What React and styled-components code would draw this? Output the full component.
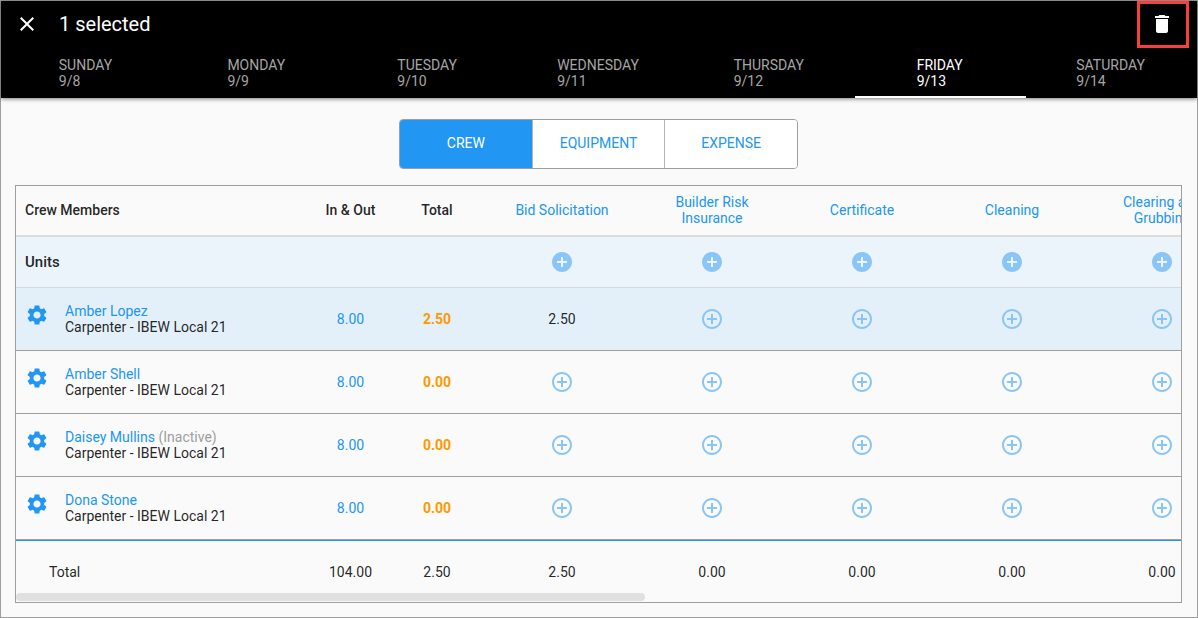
import { useState } from "react";
import styled, { createGlobalStyle } from "styled-components";
import {
  MdAddCircle,
  MdAddCircleOutline,
  MdClose,
  MdDelete,
  MdSettings,
} from "react-icons/md";

const GlobalStyle = createGlobalStyle`
  * {
    box-sizing: border-box;
  }

  body {
    margin: 0;
    background: #fafafa;
    color: rgba(0, 0, 0, 0.87);
    font-family: Roboto, "Liberation Sans", sans-serif;
    font-size: 14px;
    line-height: 16px;
  }

  button {
    padding: 0;
    border: 0;
    background: none;
    color: inherit;
    font: inherit;
    cursor: pointer;
  }

  a {
    color: #2196f3;
    text-decoration: none;
  }
`;

const SPage = styled.div`
  min-height: 100vh;
  border: 1px solid #9e9e9e;
`;

const SHeader = styled.header`
  background: #000;
  color: #fff;
  box-shadow: 0 1px 4px rgba(0, 0, 0, 0.5);
`;

const SToolbar = styled.div`
  display: flex;
  align-items: center;
  height: 47px;
  padding: 0 8px 1px 14px;
`;

const SIconButton = styled.button`
  display: flex;
  align-items: center;
  justify-content: center;
  font-size: 24px;
  color: ${({ $color }) => $color || "inherit"};
`;

const SDeleteButton = styled(SIconButton)`
  align-self: flex-start;
  width: 52px;
  height: 47px;
  margin-left: auto;
  padding: 0 2px 1px 0;
  border: 3px solid #f93e3e;
`;

const STitle = styled.h1`
  margin: 0 0 0 20px;
  font-size: 20px;
  line-height: 24px;
  font-weight: 400;
`;

const STabs = styled.nav`
  display: flex;
`;

const STab = styled.button`
  flex: 1;
  display: flex;
  justify-content: center;
  height: 50px;
  padding: 9px 2px 0 0;
  border-bottom: 2px solid ${({ $active }) => ($active ? "#fff" : "transparent")};
  color: ${({ $active }) => ($active ? "#fff" : "#a6a6a6")};
  font-weight: 400;
  text-align: left;
`;

const SMain = styled.main`
  padding: 21px 15px 14px 14px;
`;

const SToggle = styled.div`
  display: flex;
  width: 399px;
  height: 50px;
  margin: 0 auto 16px;
  border: 1px solid #9e9e9e;
  border-radius: 4px;
  overflow: hidden;
  background: #fff;
`;

const SToggleButton = styled.button`
  flex: 1;
  padding-bottom: 2px;
  background: ${({ $active }) => ($active ? "#2196f3" : "#fff")};
  color: ${({ $active }) => ($active ? "#fff" : "#2196f3")};

  & + & {
    border-left: 1px solid #b4b4b4;
  }
`;

const SPanel = styled.section`
  border: 1px solid #9e9e9e;
`;

const SScroller = styled.div`
  overflow-x: auto;
  scrollbar-width: none;
`;

const STable = styled.table`
  width: 2151px;
  table-layout: fixed;
  border-collapse: separate;
  border-spacing: 0;
`;

const SHeadCell = styled.th`
  height: 51px;
  padding: 0 ${({ $left }) => ($left ? 9 : 10)}px 2px;
  border-bottom: 2px solid #dcdcdc;
  font-weight: ${({ $bold }) => ($bold ? 500 : 400)};
  text-align: ${({ $left }) => ($left ? "left" : "center")};
`;

const STaskHeadCell = styled(SHeadCell)`
  padding: 0 24px 2px;
`;

const SCell = styled.td`
  height: 63px;
  padding: 0;
  border-bottom: 1px solid #9e9e9e;
  text-align: center;
  color: ${({ $color }) => $color || "inherit"};
  font-weight: ${({ $bold }) => ($bold ? 700 : 400)};
`;

const SAddButton = styled(SIconButton)`
  margin: 0 auto;
`;

const SUnitCell = styled(SCell)`
  height: 51px;
  border-bottom-color: #d5dade;
`;

const SUnitLabel = styled.th`
  padding: 0 9px;
  border-bottom: 1px solid #d5dade;
  font-size: 15px;
  font-weight: 500;
  text-align: left;
`;

const SRow = styled.tr`
  background: ${({ $background }) => $background || "transparent"};
`;

const SMember = styled.div`
  display: flex;
  align-items: flex-start;
  gap: 16px;
  padding-left: 9px;
  text-align: left;
`;

const SInactive = styled.span`
  color: #9e9e9e;
`;

const STotalCell = styled.td`
  height: 53px;
  padding: 10px 0 0 ${({ $left }) => ($left ? 33 : 0)}px;
  border-top: 1px solid #2196f3;
  text-align: ${({ $left }) => ($left ? "left" : "center")};
`;

const SScrollThumb = styled.div`
  width: 54%;
  height: 8px;
  margin-bottom: 1px;
  border-radius: 4px;
  background: #e0e0e0;
`;

const BLUE = "#2196f3";
const ORANGE = "#ff9800";
const LIGHT_BLUE = "#8ac5f7";

const days = [
  ["SUNDAY", "9/8"],
  ["MONDAY", "9/9"],
  ["TUESDAY", "9/10"],
  ["WEDNESDAY", "9/11"],
  ["THURSDAY", "9/12"],
  ["FRIDAY", "9/13"],
  ["SATURDAY", "9/14"],
];

const views = ["CREW", "EQUIPMENT", "EXPENSE"];

const tasks = [
  { name: "Bid Solicitation", total: "2.50" },
  { name: "Builder Risk Insurance", total: "0.00" },
  { name: "Certificate", total: "0.00" },
  { name: "Cleaning", total: "0.00" },
  { name: "Clearing and Grubbing", total: "0.00" },
];

const crew = [
  { name: "Amber Lopez", total: "2.50", hours: { "Bid Solicitation": "2.50" }, selected: true },
  { name: "Amber Shell", total: "0.00", hours: {} },
  { name: "Daisey Mullins", total: "0.00", hours: {}, inactive: true },
  { name: "Dona Stone", total: "0.00", hours: {} },
];

const CrewRow = ({ member }) => (
  <SRow $background={member.selected && "#e3f0fa"}>
    <SCell>
      <SMember>
        <SIconButton $color={BLUE} aria-label={`Settings for ${member.name}`}>
          <MdSettings />
        </SIconButton>
        <div>
          <div>
            <a href="#member">{member.name}</a>
            {member.inactive && <SInactive> (Inactive)</SInactive>}
          </div>
          <div>Carpenter - IBEW Local 21</div>
        </div>
      </SMember>
    </SCell>
    <SCell>
      <a href="#time">8.00</a>
    </SCell>
    <SCell $color={ORANGE} $bold>
      {member.total}
    </SCell>
    {tasks.map(({ name }) => (
      <SCell key={name}>
        {member.hours[name] || (
          <SAddButton $color={LIGHT_BLUE} aria-label={`Add ${name} for ${member.name}`}>
            <MdAddCircleOutline />
          </SAddButton>
        )}
      </SCell>
    ))}
    <SCell />
  </SRow>
);

const CrewTable = () => (
  <STable>
    <colgroup>
      <col width="298" />
      <col width="73" />
      <col width="100" />
      {tasks.map(({ name }) => (
        <col key={name} width="150" />
      ))}
      <col />
    </colgroup>
    <thead>
      <tr>
        <SHeadCell $left $bold>Crew Members</SHeadCell>
        <SHeadCell $bold>In &amp; Out</SHeadCell>
        <SHeadCell $bold>Total</SHeadCell>
        {tasks.map(({ name }) => (
          <STaskHeadCell key={name}>
            <a href="#task">{name}</a>
          </STaskHeadCell>
        ))}
        <STaskHeadCell />
      </tr>
    </thead>
    <tbody>
      <SRow $background="#ebf3fb">
        <SUnitLabel scope="row">Units</SUnitLabel>
        <SUnitCell />
        <SUnitCell />
        {tasks.map(({ name }) => (
          <SUnitCell key={name}>
            <SAddButton $color={LIGHT_BLUE} aria-label={`Add ${name} units`}>
              <MdAddCircle />
            </SAddButton>
          </SUnitCell>
        ))}
        <SUnitCell />
      </SRow>
      {crew.map((member) => (
        <CrewRow key={member.name} member={member} />
      ))}
    </tbody>
    <tfoot>
      <tr>
        <STotalCell $left>Total</STotalCell>
        <STotalCell>104.00</STotalCell>
        <STotalCell>2.50</STotalCell>
        {tasks.map(({ name, total }) => (
          <STotalCell key={name}>{total}</STotalCell>
        ))}
        <STotalCell />
      </tr>
    </tfoot>
  </STable>
);

const App = () => {
  const [day, setDay] = useState("FRIDAY");
  const [view, setView] = useState("CREW");

  return (
    <SPage>
      <GlobalStyle />
      <SHeader>
        <SToolbar>
          <SIconButton aria-label="Clear selection">
            <MdClose />
          </SIconButton>
          <STitle>1 selected</STitle>
          <SDeleteButton aria-label="Delete">
            <MdDelete />
          </SDeleteButton>
        </SToolbar>
        <STabs>
          {days.map(([name, date]) => (
            <STab key={name} $active={name === day} onClick={() => setDay(name)}>
              <span>
                {name}
                <br />
                {date}
              </span>
            </STab>
          ))}
        </STabs>
      </SHeader>
      <SMain>
        <SToggle>
          {views.map((name) => (
            <SToggleButton key={name} $active={name === view} onClick={() => setView(name)}>
              {name}
            </SToggleButton>
          ))}
        </SToggle>
        <SPanel>
          <SScroller>
            <CrewTable />
          </SScroller>
          <SScrollThumb />
        </SPanel>
      </SMain>
    </SPage>
  );
};

export default App;
